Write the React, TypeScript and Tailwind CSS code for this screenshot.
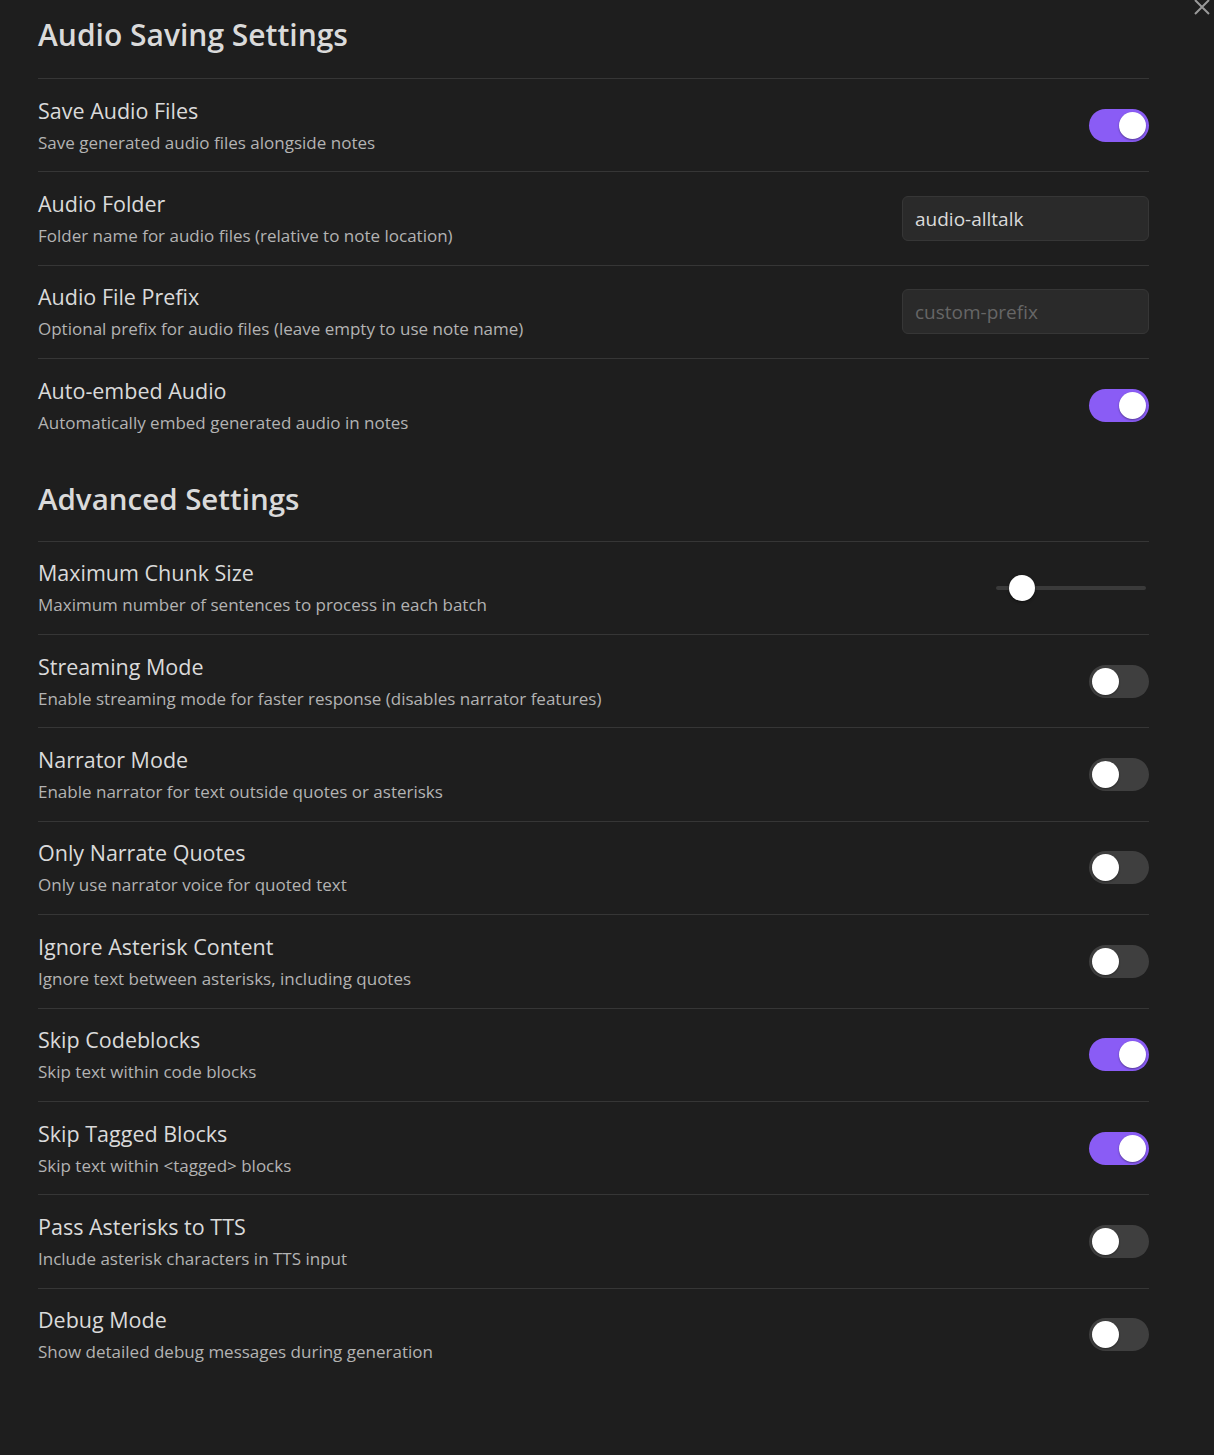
import React, { useState } from 'react';

type Setting =
  | { kind: 'toggle'; name: string; desc: string; on: boolean }
  | { kind: 'text'; name: string; desc: string; value: string; placeholder?: string }
  | { kind: 'slider'; name: string; desc: string; value: number };

const audioSettings: Setting[] = [
  { kind: 'toggle', name: 'Save Audio Files', desc: 'Save generated audio files alongside notes', on: true },
  { kind: 'text', name: 'Audio Folder', desc: 'Folder name for audio files (relative to note location)', value: 'audio-alltalk' },
  { kind: 'text', name: 'Audio File Prefix', desc: 'Optional prefix for audio files (leave empty to use note name)', value: '', placeholder: 'custom-prefix' },
  { kind: 'toggle', name: 'Auto-embed Audio', desc: 'Automatically embed generated audio in notes', on: true },
];

const advancedSettings: Setting[] = [
  { kind: 'slider', name: 'Maximum Chunk Size', desc: 'Maximum number of sentences to process in each batch', value: 13 },
  { kind: 'toggle', name: 'Streaming Mode', desc: 'Enable streaming mode for faster response (disables narrator features)', on: false },
  { kind: 'toggle', name: 'Narrator Mode', desc: 'Enable narrator for text outside quotes or asterisks', on: false },
  { kind: 'toggle', name: 'Only Narrate Quotes', desc: 'Only use narrator voice for quoted text', on: false },
  { kind: 'toggle', name: 'Ignore Asterisk Content', desc: 'Ignore text between asterisks, including quotes', on: false },
  { kind: 'toggle', name: 'Skip Codeblocks', desc: 'Skip text within code blocks', on: true },
  { kind: 'toggle', name: 'Skip Tagged Blocks', desc: 'Skip text within <tagged> blocks', on: true },
  { kind: 'toggle', name: 'Pass Asterisks to TTS', desc: 'Include asterisk characters in TTS input', on: false },
  { kind: 'toggle', name: 'Debug Mode', desc: 'Show detailed debug messages during generation', on: false },
];

const Toggle: React.FC<{ initial: boolean }> = ({ initial }) => {
  const [on, setOn] = useState(initial);
  return (
    <button
      onClick={() => setOn(v => !v)}
      className={`flex items-center w-[60px] h-[33px] rounded-full px-[3px] ${on ? 'bg-[#8a5cf5] justify-end' : 'bg-[#3f3f3f] justify-start'}`}
    >
      <span className="block w-[27px] h-[27px] rounded-full bg-white shadow-[0_1px_2px_rgba(0,0,0,0.4)]" />
    </button>
  );
};

const Slider: React.FC<{ value: number }> = ({ value }) => (
  <div className="relative w-[150px] h-[26px] flex items-center mr-[3px]">
    <div className="w-full h-[4px] rounded-full bg-[#3a3a3a]" />
    <div
      className="absolute top-0 w-[26px] h-[26px] rounded-full bg-white shadow-[0_1px_3px_rgba(0,0,0,0.5)]"
      style={{ left: `${value}px` }}
    />
  </div>
);

const Row: React.FC<{ s: Setting }> = ({ s }) => (
  <div className="flex items-center justify-between border-t border-[#363636] h-[93.4px]">
    <div className="flex flex-col pt-[2px]">
      <div className="text-[21.5px] leading-[26px] text-[#dadada]">{s.name}</div>
      <div className="text-[17px] leading-[24px] mt-[7px] text-[#b3b3b3]">{s.desc}</div>
    </div>
    {s.kind === 'toggle' && <Toggle initial={s.on} />}
    {s.kind === 'text' && (
      <input
        defaultValue={s.value}
        placeholder={s.placeholder}
        className="w-[247px] h-[45px] rounded-[6px] bg-[#2a2a2a] border border-[#363636] px-[12px] text-[19px] text-[#dadada] placeholder:text-[#666666] outline-none"
      />
    )}
    {s.kind === 'slider' && <Slider value={s.value} />}
  </div>
);

const App: React.FC = () => {
  return (
    <div
      className="relative min-h-[1455px] w-[1214px] bg-[#1e1e1e] text-[#dadada]"
      style={{ fontFamily: '"Open Sans", "Noto Sans", sans-serif' }}
    >
      <button className="absolute top-[-2px] right-[3px] text-[#9a9a9a]">
        <svg width="18" height="18" viewBox="0 0 18 18" fill="none" stroke="currentColor" strokeWidth="2">
          <path d="M2 2L16 16M16 2L2 16" />
        </svg>
      </button>

      <div className="pl-[38px] w-[1149px]">
        <h3 className="pt-[14px] pb-[23px] text-[30px] leading-[41px] font-semibold text-[#dadada]">
          Audio Saving Settings
        </h3>
        {audioSettings.map(s => (
          <Row key={s.name} s={s} />
        ))}

        <h3 className="pt-[27px] pb-[22px] text-[29.5px] leading-[40px] font-semibold text-[#dadada]">
          Advanced Settings
        </h3>
        {advancedSettings.map(s => (
          <Row key={s.name} s={s} />
        ))}
      </div>
    </div>
  );
};

export default App;
